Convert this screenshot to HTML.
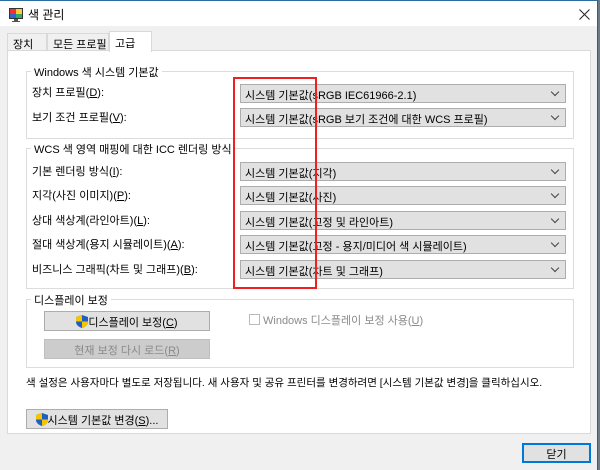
<!DOCTYPE html>
<html><head><meta charset="utf-8"><style>
*{box-sizing:border-box;margin:0;padding:0}
body{width:600px;height:470px;overflow:hidden;background:#6b7b88;font-family:"Liberation Sans","Noto Sans CJK KR",sans-serif;font-size:11px;color:#000;position:relative}
.win{position:absolute;left:0;top:0;width:598px;height:470px;background:#f0f0f0;border-right:1px solid #555}
.title{position:absolute;left:0;top:0;width:597px;height:26px;background:#fff;border-top:1px solid #2b6ea3}
.a{position:absolute;white-space:nowrap}
.tab{position:absolute;top:33px;height:18px;border:1px solid #d9d9d9;border-bottom:none;background:#f0f0f0;padding:2px 5px;white-space:nowrap}
.panel{position:absolute;left:7px;top:50px;width:584px;height:384px;background:#fff;border:1px solid #d9d9d9}
.grp{position:absolute;border:1px solid #dcdcdc}
.gt{position:absolute;background:#fff;padding:0 3px;top:-8px;left:4px;white-space:nowrap}
.dd{position:absolute;left:240px;width:326px;height:19px;background:#e1e1e1;border:1px solid #adadad;padding:2px 4px;font-size:11px;white-space:nowrap}
.dd:after{content:"";position:absolute;right:7px;top:4px;width:5px;height:5px;border-right:1px solid #444;border-bottom:1px solid #444;transform:rotate(45deg)}
.btn{position:absolute;background:#e1e1e1;border:1px solid #adadad;text-align:center;padding-top:2px;white-space:nowrap}
</style></head><body>
<div class="win">
<div class="title">
<svg style="position:absolute;left:8px;top:6px" width="16" height="16" viewBox="0 0 16 16"><rect x="1" y="1" width="14" height="11" fill="#333"/><rect x="2" y="2" width="12" height="9" fill="#3a6"/><rect x="2" y="2" width="6" height="5" fill="#e33"/><rect x="8" y="2" width="6" height="5" fill="#fc3"/><rect x="2" y="7" width="6" height="4" fill="#36c"/><rect x="6" y="12" width="4" height="2" fill="#555"/><rect x="4" y="14" width="8" height="1" fill="#555"/></svg>
<span class="a" style="left:28px;top:5px;font-size:12px">색 관리</span>
<svg style="position:absolute;left:579px;top:8px" width="11" height="11"><path d="M0.5 0.5L10.5 10.5M10.5 0.5L0.5 10.5" stroke="#222" stroke-width="1"/></svg>
</div>
<div class="tab" style="left:7px;width:40px">장치</div>
<div class="tab" style="left:47px;width:62px">모든 프로필</div>
<div class="tab" style="left:109px;top:31px;height:21px;width:43px;background:#fff;z-index:2;padding-top:3px">고급</div>
<div class="panel">
<div class="grp" style="left:18px;top:20px;width:548px;height:68px"><span class="gt">Windows 색 시스템 기본값</span></div>
<span class="a" style="left:24px;top:33px">장치 프로필(<u>D</u>):</span>
<span class="a" style="left:24px;top:58px">보기 조건 프로필(<u>V</u>):</span>
<div class="grp" style="left:18px;top:97px;width:548px;height:141px"><span class="gt">WCS 색 영역 매핑에 대한 ICC 렌더링 방식</span></div>
<span class="a" style="left:24px;top:112px">기본 렌더링 방식(<u>I</u>):</span>
<span class="a" style="left:24px;top:136px">지각(사진 이미지)(<u>P</u>):</span>
<span class="a" style="left:24px;top:161px">상대 색상계(라인아트)(<u>L</u>):</span>
<span class="a" style="left:24px;top:185px">절대 색상계(용지 시뮬레이트)(<u>A</u>):</span>
<span class="a" style="left:24px;top:210px">비즈니스 그래픽(차트 및 그래프)(<u>B</u>):</span>
<div class="grp" style="left:18px;top:248px;width:548px;height:69px"><span class="gt">디스플레이 보정</span></div>
<div class="btn" style="left:36px;top:260px;width:166px;height:20px"><svg width="12" height="13" viewBox="0 0 12 13" style="vertical-align:-2px"><path d="M6 0L12 2V7C12 10 9 12 6 13C3 12 0 10 0 7V2Z" fill="#1f5fbf"/><path d="M6 0V6.5H0V2ZM6 6.5H12V7C12 10 9 12 6 13Z" fill="#f5c400"/></svg>디스플레이 보정(<u>C</u>)</div>
<div class="btn" style="left:36px;top:288px;width:166px;height:20px;background:#ccc;border-color:#bfbfbf;color:#8a8a8a">현재 보정 다시 로드(<u>R</u>)</div>
<div class="a" style="left:241px;top:263px;width:11px;height:11px;border:1px solid #bbb"></div>
<span class="a" style="left:255px;top:261px;color:#8a8a8a">Windows 디스플레이 보정 사용(<u>U</u>)</span>
<span class="a" style="left:18px;top:324px;font-size:10.5px">색 설정은 사용자마다 별도로 저장됩니다. 새 사용자 및 공유 프린터를 변경하려면 [시스템 기본값 변경]을 클릭하십시오.</span>
<div class="btn" style="left:18px;top:358px;width:142px;height:20px"><svg width="12" height="13" viewBox="0 0 12 13" style="vertical-align:-2px"><path d="M6 0L12 2V7C12 10 9 12 6 13C3 12 0 10 0 7V2Z" fill="#1f5fbf"/><path d="M6 0V6.5H0V2ZM6 6.5H12V7C12 10 9 12 6 13Z" fill="#f5c400"/></svg>시스템 기본값 변경(<u>S</u>)...</div>
</div>
<div class="dd" style="top:84px">시스템 기본값(sRGB IEC61966-2.1)</div>
<div class="dd" style="top:108px">시스템 기본값(sRGB 보기 조건에 대한 WCS 프로필)</div>
<div class="dd" style="top:162px">시스템 기본값(지각)</div>
<div class="dd" style="top:186px">시스템 기본값(사진)</div>
<div class="dd" style="top:211px">시스템 기본값(고정 및 라인아트)</div>
<div class="dd" style="top:235px">시스템 기본값(고정 - 용지/미디어 색 시뮬레이트)</div>
<div class="dd" style="top:260px">시스템 기본값(차트 및 그래프)</div>
<div class="a" style="left:233px;top:77px;width:84px;height:212px;border:2px solid #f02020"></div>
<div class="btn" style="left:522px;top:443px;width:69px;height:20px;border:2px solid #0078d7;padding-top:1px">닫기</div>
</div>
</body></html>
